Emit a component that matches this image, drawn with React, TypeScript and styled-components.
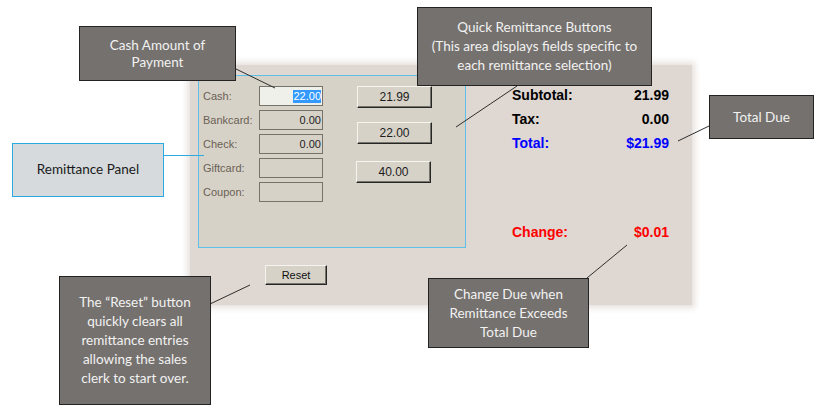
import React from 'react'
import styled, { createGlobalStyle } from 'styled-components'

const GlobalStyle = createGlobalStyle`
    html, body {
        margin: 0;
        padding: 0;
        background: #ffffff;
    }
`

const Canvas = styled.div`
    position: relative;
    width: 828px;
    height: 419px;
    overflow: hidden;
    background: #ffffff;
    padding: 65px 0 0 190px;
    box-sizing: border-box;
    font-family: 'Liberation Sans', Arial, sans-serif;
`

const FormPanel = styled.div`
    display: flex;
    width: 502px;
    height: 240px;
    background: #ded7d2;
    box-shadow: 0 0 6px 3px rgba(222, 215, 210, 0.75);
`

const LeftColumn = styled.div`
    display: flex;
    flex-direction: column;
    padding: 10px 0 0 8px;
`

const RemitGroup = styled.div`
    display: flex;
    width: 268px;
    height: 173px;
    box-sizing: border-box;
    border: 1px solid #5cc0e8;
    background: #d7d2c8;
    padding: 10px 0 0 4px;
`

const FieldList = styled.div`
    display: flex;
    flex-direction: column;
    gap: 4px;
`

const FieldRow = styled.div`
    display: grid;
    grid-template-columns: 56px 64px;
    align-items: center;
    height: 20px;
`

const FieldLabel = styled.span`
    font-size: 11px;
    color: #6a6155;
`

const TextBox = styled.div<{ $active?: boolean }>`
    display: flex;
    align-items: center;
    justify-content: flex-end;
    height: 20px;
    box-sizing: border-box;
    border: 1px solid #76746a;
    background: ${(p) => (p.$active ? '#f0f0eb' : 'transparent')};
    padding-right: 1px;
    font-size: 11px;
    color: #222222;
`

const Selected = styled.span`
    background: #3399ff;
    color: #ffffff;
    line-height: 13px;
`

const QuickColumn = styled.div`
    display: flex;
    flex-direction: column;
    gap: 14px;
    margin-left: 34px;
`

const WinButton = styled.button<{ $shift?: number; $width?: number; $height?: number }>`
    width: ${(p) => p.$width ?? 75}px;
    height: ${(p) => p.$height ?? 22}px;
    margin-top: ${(p) => p.$shift ?? 0}px;
    margin-left: ${(p) => -(p.$shift ?? 0) / 3}px;
    padding: 0;
    box-sizing: border-box;
    border: 1px solid;
    border-color: #f6f4ef #262626 #262626 #f6f4ef;
    box-shadow: inset -1px -1px 0 #77746b;
    background: #d7d2c8;
    font-family: 'Liberation Sans', Arial, sans-serif;
    font-size: 12px;
    color: #1c1c1c;
`

const ResetButton = styled(WinButton)`
    margin: 17px 0 0 67px;
    font-size: 11px;
    color: #101010;
`

const Totals = styled.div`
    display: flex;
    flex-direction: column;
    width: 157px;
    margin: 18px 0 0 46px;
`

const TotalRow = styled.div<{ $tone: string; $gap?: number }>`
    display: flex;
    justify-content: space-between;
    align-items: center;
    height: 24px;
    margin-top: ${(p) => p.$gap ?? 0}px;
    font-size: 14px;
    font-weight: bold;
    color: ${(p) => p.$tone};
`

const Callout = styled.div<{ $x: number; $y: number; $w: number; $h: number; $lh?: number }>`
    position: absolute;
    left: ${(p) => p.$x}px;
    top: ${(p) => p.$y}px;
    width: ${(p) => p.$w}px;
    height: ${(p) => p.$h}px;
    box-sizing: border-box;
    display: flex;
    align-items: center;
    justify-content: center;
    text-align: center;
    border: 1px solid #232323;
    background: #75716e;
    color: #f2f2f2;
    font-family: Lato, 'Open Sans', sans-serif;
    font-size: 13.5px;
    line-height: ${(p) => p.$lh ?? 19}px;
    padding: 0 4px;
    z-index: 2;
`

const InfoCallout = styled(Callout)`
    border-color: #29abe2;
    background: #d6dadd;
    color: #1a1a1a;
    padding-bottom: 1px;
`

const Connectors = styled.svg`
    position: absolute;
    left: 0;
    top: 0;
    pointer-events: none;
    z-index: 1;
`

const fields = [
    { label: 'Cash:', value: '22.00', active: true },
    { label: 'Bankcard:', value: '0.00' },
    { label: 'Check:', value: '0.00' },
    { label: 'Giftcard:', value: '' },
    { label: 'Coupon:', value: '' },
]

const App = () => {
    return (
        <>
            <GlobalStyle />
            <Canvas>
                <FormPanel>
                    <LeftColumn>
                        <RemitGroup>
                            <FieldList>
                                {fields.map((f) => (
                                    <FieldRow key={f.label}>
                                        <FieldLabel>{f.label}</FieldLabel>
                                        <TextBox $active={f.active}>
                                            {f.active ? <Selected>{f.value}</Selected> : f.value}
                                        </TextBox>
                                    </FieldRow>
                                ))}
                            </FieldList>
                            <QuickColumn>
                                <WinButton>21.99</WinButton>
                                <WinButton>22.00</WinButton>
                                <WinButton $shift={3}>40.00</WinButton>
                            </QuickColumn>
                        </RemitGroup>
                        <ResetButton $width={62} $height={20}>Reset</ResetButton>
                    </LeftColumn>
                    <Totals>
                        <TotalRow $tone="#000000">
                            <span>Subtotal:</span>
                            <span>21.99</span>
                        </TotalRow>
                        <TotalRow $tone="#000000">
                            <span>Tax:</span>
                            <span>0.00</span>
                        </TotalRow>
                        <TotalRow $tone="#0000ff">
                            <span>Total:</span>
                            <span>$21.99</span>
                        </TotalRow>
                        <TotalRow $tone="#ff0000" $gap={65}>
                            <span>Change:</span>
                            <span>$0.01</span>
                        </TotalRow>
                    </Totals>
                </FormPanel>

                <Connectors width="828" height="419">
                    <g stroke="#2e2e2e" strokeWidth="1">
                        <line x1="236" y1="69" x2="275" y2="88" />
                        <line x1="517" y1="86" x2="456" y2="127" />
                        <line x1="709" y1="126" x2="678" y2="141" />
                        <line x1="627" y1="245" x2="587" y2="278" />
                        <line x1="210" y1="304" x2="250" y2="285" />
                    </g>
                    <line x1="163" y1="155.5" x2="204" y2="155.5" stroke="#29abe2" strokeWidth="1" />
                </Connectors>

                <Callout $x={79} $y={26} $w={157} $h={55} $lh={17}>
                    Cash Amount of<br />Payment
                </Callout>
                <InfoCallout $x={12} $y={143} $w={152} $h={54}>
                    Remittance Panel
                </InfoCallout>
                <Callout $x={417} $y={7} $w={235} $h={79}>
                    Quick Remittance Buttons<br />(This area displays fields specific to<br />each remittance selection)
                </Callout>
                <Callout $x={709} $y={95} $w={105} $h={44}>
                    Total Due
                </Callout>
                <Callout $x={428} $y={278} $w={161} $h={70}>
                    Change Due when<br />Remittance Exceeds<br />Total Due
                </Callout>
                <Callout $x={59} $y={276} $w={152} $h={129}>
                    The “Reset” button<br />quickly clears all<br />remittance entries<br />allowing the sales<br />clerk to start over.
                </Callout>
            </Canvas>
        </>
    )
}

export default App
